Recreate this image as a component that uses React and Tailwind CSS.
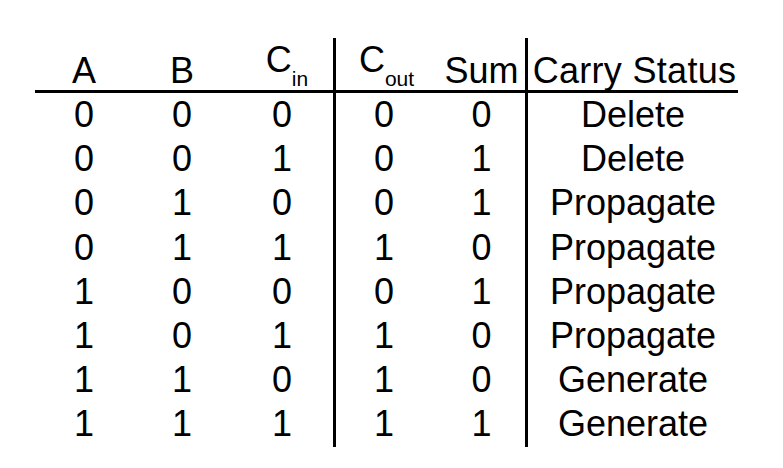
const rows = [
  ['0', '0', '0', '0', '0', 'Delete'],
  ['0', '0', '1', '0', '1', 'Delete'],
  ['0', '1', '0', '0', '1', 'Propagate'],
  ['0', '1', '1', '1', '0', 'Propagate'],
  ['1', '0', '0', '0', '1', 'Propagate'],
  ['1', '0', '1', '1', '0', 'Propagate'],
  ['1', '1', '0', '1', '0', 'Generate'],
  ['1', '1', '1', '1', '1', 'Generate'],
];

const cols = [
  'w-[98px]',
  'w-[98px]',
  'w-[102px]',
  'w-[99px] border-l-[3px] border-black',
  'w-[93px] pl-[6px]',
  'w-[213px] border-l-[3px] border-black',
];

function Sub({ main, sub }) {
  return (
    <>
      <span className="relative -top-[11px]">{main}</span>
      <span className="relative top-[3px] text-[21px] leading-none">{sub}</span>
    </>
  );
}

const headers = [
  { label: 'A' },
  { label: 'B' },
  { label: <Sub main="C" sub="in" />, extra: 'pl-[10px]' },
  { label: <Sub main="C" sub="out" />, extra: 'pl-[5px]' },
  { label: 'Sum' },
  { label: 'Carry Status', extra: 'whitespace-nowrap tracking-[0.3px] pl-[3px]' },
];

export default function App() {
  return (
    <div
      className="h-[468px] w-[783px] bg-white pl-[35px] pt-[38px] text-black"
      style={{ fontFamily: '"Liberation Sans", Arial, sans-serif' }}
    >
      <div className="flex h-[52px] w-[703px] box-content border-b-[3px] border-black">
        {headers.map((h, i) => (
          <div
            key={i}
            className={`${cols[i]} ${h.extra || ''} h-[52px] pt-[15px] text-center text-[36px] leading-[35px]`}
          >
            {h.label}
          </div>
        ))}
      </div>
      {rows.map((row, r) => (
        <div key={r} className="flex h-[44.2px]">
          {row.map((cell, i) => (
            <div key={i} className={`${cols[i]} text-center text-[36px] leading-[44.2px]`}>
              {cell}
            </div>
          ))}
        </div>
      ))}
    </div>
  );
}
